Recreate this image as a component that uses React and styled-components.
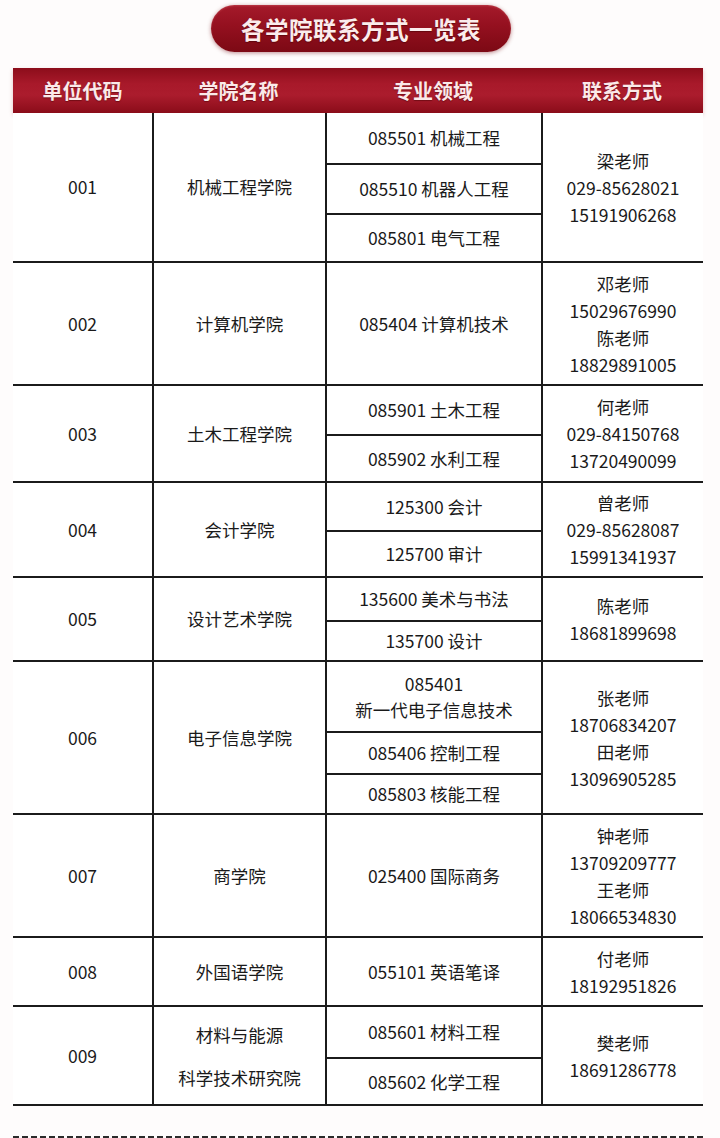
import styled, { createGlobalStyle } from "styled-components";

const rows = [
  {
    code: "001",
    name: ["机械工程学院"],
    majors: [["085501 机械工程"], ["085510 机器人工程"], ["085801 电气工程"]],
    subs: [50, 50, 48],
    contact: ["梁老师", "029-85628021", "15191906268"],
  },
  {
    code: "002",
    name: ["计算机学院"],
    majors: [["085404 计算机技术"]],
    subs: [121],
    contact: ["邓老师", "15029676990", "陈老师", "18829891005"],
  },
  {
    code: "003",
    name: ["土木工程学院"],
    majors: [["085901 土木工程"], ["085902 水利工程"]],
    subs: [48, 47],
    contact: ["何老师", "029-84150768", "13720490099"],
  },
  {
    code: "004",
    name: ["会计学院"],
    majors: [["125300 会计"], ["125700 审计"]],
    subs: [47, 46],
    contact: ["曾老师", "029-85628087", "15991341937"],
  },
  {
    code: "005",
    name: ["设计艺术学院"],
    majors: [["135600 美术与书法"], ["135700 设计"]],
    subs: [42, 40],
    contact: ["陈老师", "18681899698"],
  },
  {
    code: "006",
    name: ["电子信息学院"],
    majors: [["085401", "新一代电子信息技术"], ["085406 控制工程"], ["085803 核能工程"]],
    subs: [69, 42, 40],
    contact: ["张老师", "18706834207", "田老师", "13096905285"],
  },
  {
    code: "007",
    name: ["商学院"],
    majors: [["025400 国际商务"]],
    subs: [121],
    contact: ["钟老师", "13709209777", "王老师", "18066534830"],
  },
  {
    code: "008",
    name: ["外国语学院"],
    majors: [["055101 英语笔译"]],
    subs: [67],
    contact: ["付老师", "18192951826"],
  },
  {
    code: "009",
    name: ["材料与能源", "科学技术研究院"],
    nameLine: 43,
    majors: [["085601 材料工程"], ["085602 化学工程"]],
    subs: [50, 47],
    contact: ["樊老师", "18691286778"],
  },
];

const App = () => {
  return (
    <Page>
      <GlobalStyle />
      <Title>各学院联系方式一览表</Title>
      <Table>
        <HeadRow>
          <HeadCell>单位代码</HeadCell>
          <HeadCell>学院名称</HeadCell>
          <HeadCell>专业领域</HeadCell>
          <HeadCell>联系方式</HeadCell>
        </HeadRow>
        {rows.map((r) => (
          <Row key={r.code}>
            <Cell>{r.code}</Cell>
            <Cell divided lineHeight={r.nameLine}>
              {r.name.map((t) => (
                <span key={t}>{t}</span>
              ))}
            </Cell>
            <MajorCol>
              {r.majors.map((m, i) => (
                <Sub key={i} style={{ height: r.subs[i] }}>
                  {m.map((t) => (
                    <span key={t}>{t}</span>
                  ))}
                </Sub>
              ))}
            </MajorCol>
            <Cell divided lineHeight={27}>
              {r.contact.map((t, i) => (
                <span key={i}>{t}</span>
              ))}
            </Cell>
          </Row>
        ))}
      </Table>
      <Dashes />
    </Page>
  );
};

const GlobalStyle = createGlobalStyle`
  body {
    margin: 0;
    background: #fefcfc;
    font-family: "Noto Sans CJK SC", "Noto Sans", sans-serif;
    color: #1a1a1a;
  }
  * { box-sizing: border-box; }
`;

const Page = styled.div`
  width: 720px;
  padding: 5px 17px 0 13px;
  display: flex;
  flex-direction: column;
  align-items: stretch;
`;

const Title = styled.div`
  align-self: center;
  margin-left: 6px;
  width: 300px;
  height: 47px;
  border-radius: 24px;
  background: linear-gradient(180deg, #a51a2b 0%, #94101f 45%, #7c0914 100%);
  box-shadow: 0 1px 4px rgba(110, 0, 10, 0.45), inset 0 1px 2px rgba(255, 150, 150, 0.25);
  color: #fbecec;
  font-size: 23.5px;
  font-weight: 700;
  letter-spacing: 0.5px;
  display: flex;
  align-items: center;
  justify-content: center;
  text-shadow: 0 1px 1px rgba(60, 0, 0, 0.5);
`;

const Table = styled.div`
  margin-top: 16px;
  width: 690px;
`;

const columns = "139px 173px 216px 162px";

const HeadRow = styled.div`
  display: grid;
  grid-template-columns: ${columns};
  height: 45px;
  background: linear-gradient(180deg, #8c0d1b 0%, #a8192a 35%, #ab1c2d 60%, #8a0c19 100%);
  box-shadow: 0 2px 4px rgba(150, 20, 30, 0.25);
`;

const HeadCell = styled.div`
  display: flex;
  align-items: center;
  justify-content: center;
  color: #fbe9e9;
  font-size: 20px;
  font-weight: 700;
  text-shadow: 0 1px 1px rgba(60, 0, 0, 0.45);
`;

const Row = styled.div`
  display: grid;
  grid-template-columns: ${columns};
  border-bottom: 2px solid #1b1b1b;
  background: #fff;
`;

const Cell = styled.div`
  display: flex;
  flex-direction: column;
  align-items: center;
  justify-content: center;
  font-size: 17.5px;
  line-height: ${({ lineHeight }) => (lineHeight ? `${lineHeight}px` : "24px")};
  border-left: ${({ divided }) => (divided ? "2px solid #1b1b1b" : "none")};
  text-align: center;
`;

const MajorCol = styled.div`
  display: flex;
  flex-direction: column;
  border-left: 2px solid #1b1b1b;
`;

const Sub = styled.div`
  display: flex;
  flex-direction: column;
  align-items: center;
  justify-content: center;
  font-size: 17.5px;
  line-height: 26px;

  & + & {
    border-top: 2px solid #1b1b1b;
  }
`;

const Dashes = styled.div`
  margin-top: 30px;
  width: 690px;
  height: 2px;
  background: repeating-linear-gradient(90deg, #2a2a2a 0 6px, transparent 6px 9px);
`;

export default App;
